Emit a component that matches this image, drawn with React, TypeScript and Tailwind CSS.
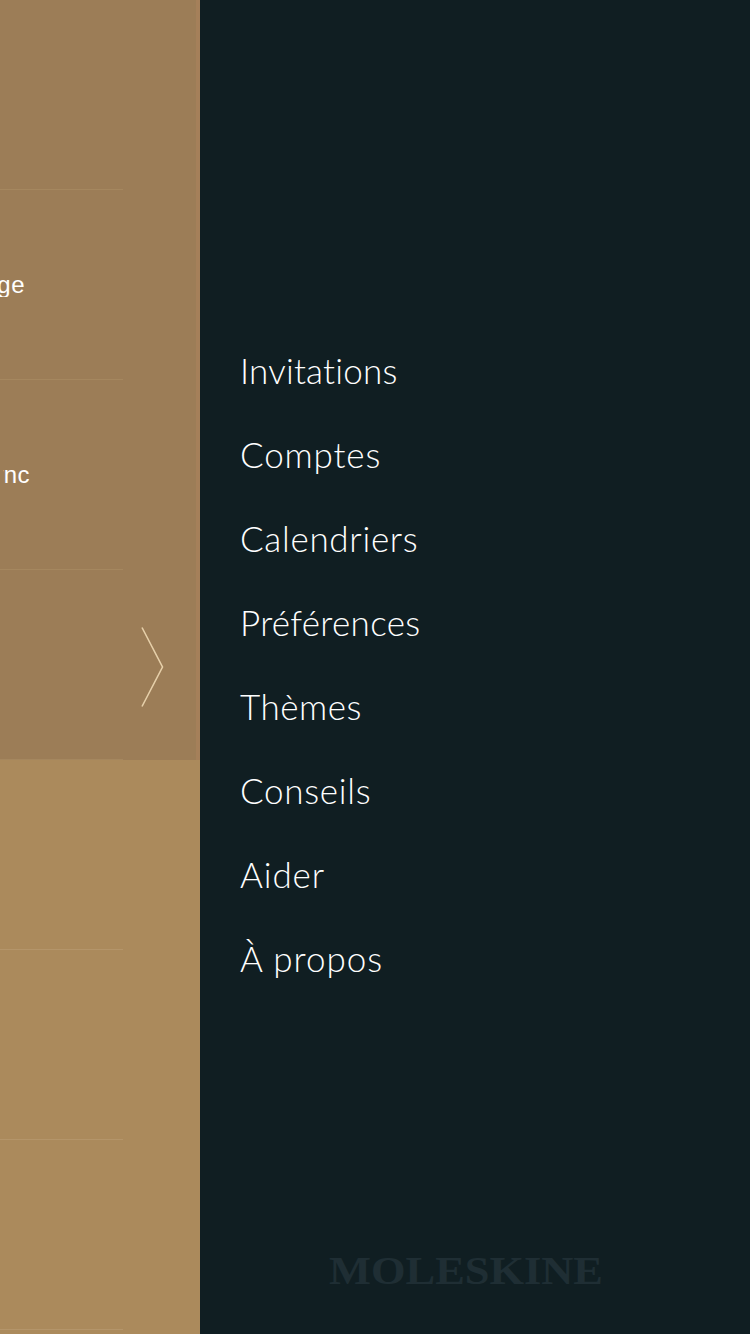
const items = [
  { t: "Invitations", c: "tracking-[0.2px]" },
  { t: "Comptes", c: "tracking-[0.85px]" },
  { t: "Calendriers", c: "tracking-[0.7px]" },
  { t: "Préférences", c: "tracking-[0.3px]" },
  { t: "Thèmes", c: "tracking-[0.5px]" },
  { t: "Conseils", c: "tracking-[0.7px]" },
  { t: "Aider", c: "tracking-[0.9px]" },
  { t: "À propos", c: "tracking-[1px]" },
];

function Row({ label, width, dark }: { label?: string; width?: string; dark?: boolean }) {
  return (
    <div className={`h-[190px] w-[123px] shrink-0 border-b ${dark ? "border-[#a5875f]" : "border-[#b4956a]"} flex items-center`}>
      {label ? (
        <div className={`${width} overflow-hidden flex justify-end whitespace-nowrap text-white text-[24px] leading-none tracking-[0.5px] font-['Liberation_Sans',sans-serif]`}>
          <span className="shrink-0">{label}</span>
        </div>
      ) : null}
    </div>
  );
}

export default function App() {
  return (
    <div className="w-[750px] h-[1334px] overflow-hidden flex bg-[#101e22]">
      <div className="relative w-[200px] shrink-0 h-full flex flex-col bg-[#ab8a5c]">
        <div className="w-[200px] h-[760px] shrink-0 bg-[#9c7d57] border-r-[4px] border-[#a5805a] flex flex-col">
          <Row dark />
          <Row dark label="Partage" width="w-[25px]" />
          <Row dark label="Sync" width="w-[27px] ml-[3px]" />
          <Row dark />
        </div>
        <Row />
        <Row />
        <Row />
        <svg className="absolute left-[140px] top-[626px]" width="26" height="83" viewBox="0 0 26 83" fill="none">
          <path d="M2 1.5 L22.5 41 L2 80.5" stroke="#e6cfa9" strokeWidth="1.6" />
        </svg>
      </div>
      <div className="relative flex-1 h-full pl-[40px] pt-[328px] flex flex-col bg-[#101e22]">
        {items.map(({ t, c }) => (
          <div key={t} className={`h-[84px] shrink-0 flex items-center text-white text-[35px] font-light font-['Lato',sans-serif] ${c}`}>
            {t}
          </div>
        ))}
        <div className="absolute left-[130px] top-[1250px] w-[272px] flex justify-center scale-x-[1.11] text-[#1f2e34] text-[40px] leading-[42px] font-bold whitespace-nowrap font-['Liberation_Serif',serif]">
          MOLESKINE
        </div>
      </div>
    </div>
  );
}
